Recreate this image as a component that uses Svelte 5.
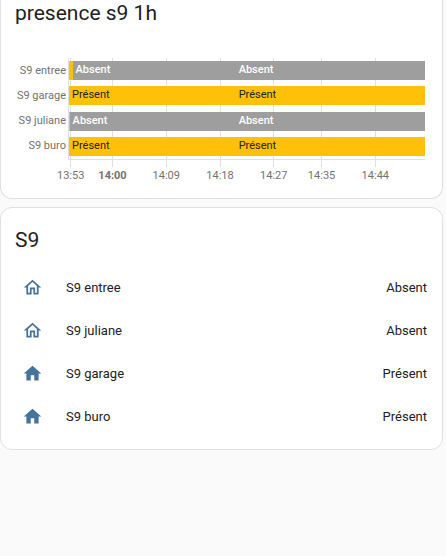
<script lang="ts">
  type State = 'on' | 'off'

  const stateLabels: Record<State, string> = { on: 'Présent', off: 'Absent' }

  // minutes relative to 14:00
  const start = -7.2
  const end = 52.4

  const history: { name: string; segments: { state: State; from: number; to: number; label: boolean }[] }[] = [
    {
      name: 'S9 entree',
      segments: [
        { state: 'on', from: start, to: -6.6, label: false },
        { state: 'off', from: -6.6, to: 20.7, label: true },
        { state: 'off', from: 20.7, to: end, label: true },
      ],
    },
    {
      name: 'S9 garage',
      segments: [
        { state: 'on', from: start, to: 20.7, label: true },
        { state: 'on', from: 20.7, to: end, label: true },
      ],
    },
    {
      name: 'S9 juliane',
      segments: [
        { state: 'on', from: start, to: -7.1, label: false },
        { state: 'off', from: -7.1, to: 20.7, label: true },
        { state: 'off', from: 20.7, to: end, label: true },
      ],
    },
    {
      name: 'S9 buro',
      segments: [
        { state: 'on', from: start, to: 20.7, label: true },
        { state: 'on', from: 20.7, to: end, label: true },
      ],
    },
  ]

  const ticks = [
    { at: -7, label: '13:53' },
    { at: 0, label: '14:00' },
    { at: 9, label: '14:09' },
    { at: 18, label: '14:18' },
    { at: 27, label: '14:27' },
    { at: 35, label: '14:35' },
    { at: 44, label: '14:44' },
  ]

  const entities: { name: string; state: State }[] = [
    { name: 'S9 entree', state: 'off' },
    { name: 'S9 juliane', state: 'off' },
    { name: 'S9 garage', state: 'on' },
    { name: 'S9 buro', state: 'on' },
  ]

  const icons: Record<State, string> = {
    on: 'M10 20V14H14V20H19V12H22L12 3L2 12H5V20H10Z',
    off: 'M12 5.69L17 10.19V18H15V12H9V18H7V10.19L12 5.69M12 3L2 12H5V20H11V14H13V20H19V12H22L12 3Z',
  }

  const percent = (minutes: number) => (minutes / (end - start)) * 100
</script>

<main>
  <section class="card history">
    <h1>presence s9 1h</h1>
    <div class="chart">
      <div class="names">
        {#each history as row}
          <span>{row.name}</span>
        {/each}
      </div>
      <div class="plot">
        {#each ticks as tick}
          <div class="tick" style="left: {percent(tick.at - start)}%">
            <span class:hour={tick.at === 0}>{tick.label}</span>
          </div>
        {/each}
        {#each history as row}
          <div class="bar">
            {#each row.segments as s}
              <div class="segment {s.state}" style="width: {percent(s.to - s.from)}%">
                {#if s.label}<span>{stateLabels[s.state]}</span>{/if}
              </div>
            {/each}
          </div>
        {/each}
      </div>
    </div>
  </section>

  <section class="card entities">
    <h1>S9</h1>
    <ul>
      {#each entities as entity}
        <li>
          <svg viewBox="0 0 24 24" aria-hidden="true"><path d={icons[entity.state]} /></svg>
          <span class="name">{entity.name}</span>
          <span>{stateLabels[entity.state]}</span>
        </li>
      {/each}
    </ul>
  </section>
</main>

<style>
  :global(body) {
    background: #fafafa;
  }
  main {
    display: flex;
    flex-direction: column;
    gap: 8px;
    padding-right: 3px;
    font-family: Roboto, 'Noto Sans', sans-serif;
    color: #212121;
  }
  .card {
    background: white;
    border: 1px solid #e0e0e0;
    border-radius: 12px;
  }
  .history {
    border-top: none;
    border-top-left-radius: 0;
    border-top-right-radius: 0;
    padding: 0 17px 38px 14px;
  }
  .entities {
    padding: 19px 15px 11px 14px;
  }
  h1 {
    margin: 0;
    font-size: 21px;
    font-weight: 400;
    line-height: 26px;
  }
  .chart {
    display: flex;
    margin-top: 32px;
    font-size: 11px;
    line-height: 18px;
  }
  .names {
    width: 53px;
    display: grid;
    grid-auto-rows: 1fr;
    justify-items: end;
    align-items: center;
    padding-bottom: 2px;
    padding-right: 2px;
    box-sizing: border-box;
    color: #727272;
    white-space: nowrap;
  }
  .plot {
    position: relative;
    flex: 1;
    height: 101px;
    display: grid;
    grid-auto-rows: 1fr;
    align-items: center;
    border-left: 1px solid #e0e0e0;
    border-bottom: 1px solid #e0e0e0;
  }
  .tick {
    position: absolute;
    top: 0;
    bottom: -8px;
    width: 1px;
    background: #e0e0e0;
  }
  .tick span {
    position: absolute;
    top: 100%;
    left: 50%;
    transform: translateX(-50%);
    color: #727272;
  }
  .tick .hour {
    font-weight: 700;
  }
  .bar {
    position: relative;
    display: flex;
    height: 19px;
  }
  .segment {
    flex: none;
    overflow: hidden;
  }
  .segment span {
    padding-left: 3px;
  }
  .on {
    background: #ffc107;
  }
  .off {
    background: #9e9e9e;
    color: white;
    font-weight: 500;
  }
  ul {
    margin: 13px 0 0;
    padding: 0;
    list-style: none;
  }
  li {
    display: flex;
    align-items: center;
    height: 43px;
    font-size: 13px;
  }
  svg {
    width: 21px;
    height: 21px;
    margin: 0 23px 0 7px;
    fill: #44739e;
  }
  .name {
    flex: 1;
  }
</style>
